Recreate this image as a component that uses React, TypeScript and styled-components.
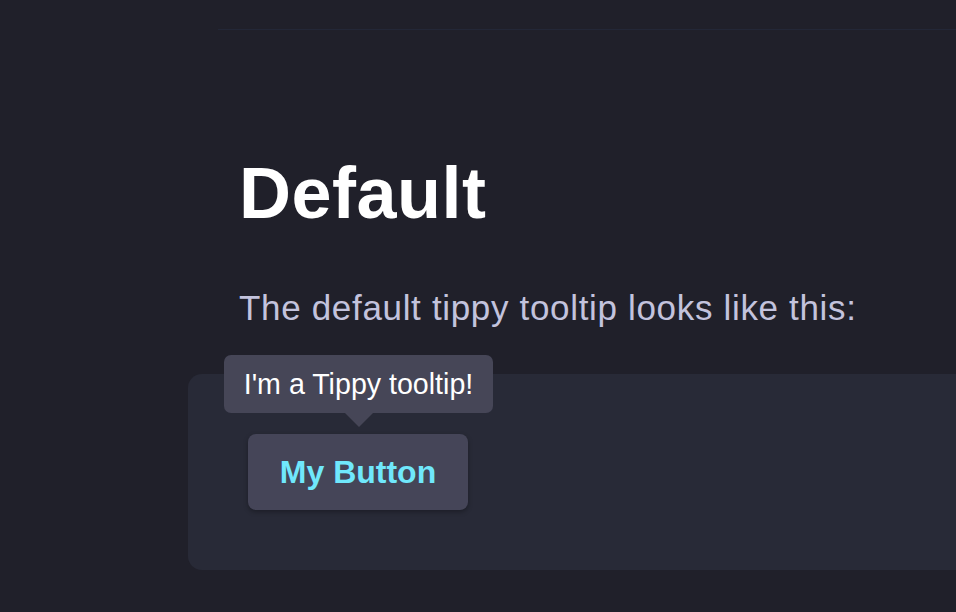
import styled, { createGlobalStyle } from 'styled-components';

const GlobalStyle = createGlobalStyle`
  html, body {
    margin: 0;
    padding: 0;
    background-color: #20202a;
    overflow: hidden;
  }
  body {
    font-family: "Liberation Sans", Arial, Helvetica, sans-serif;
  }
`;

const Page = styled.div`
  width: 956px;
  height: 612px;
  background-color: #20202a;
`;

const TopBar = styled.div`
  margin-left: 218px;
  height: 29px;
  border-bottom: 1px solid #232737;
`;

const Content = styled.main`
  padding-left: 239px;
  padding-top: 127px;
`;

const Heading = styled.h1`
  margin: 0;
  font-size: 72px;
  line-height: 72px;
  font-weight: 700;
  color: #ffffff;
  letter-spacing: 0.5px;
`;

const Lead = styled.p`
  margin: 61px 0 0;
  font-size: 35px;
  line-height: 35px;
  color: #c3c3dd;
  letter-spacing: 0.67px;
`;

const DemoPanel = styled.section`
  margin: 49px 0 0 -51px;
  padding: 60px;
  background-color: #282a37;
  border-radius: 14px 0 0 14px;
`;

const Anchor = styled.div`
  position: relative;
  display: inline-block;
`;

const Button = styled.button`
  display: flex;
  align-items: center;
  justify-content: center;
  width: 220px;
  height: 76px;
  padding: 0;
  border: none;
  border-radius: 8px;
  background-color: #454558;
  box-shadow: 0 2px 5px rgba(0, 0, 0, 0.3);
  color: #70e8fc;
  font-family: "Liberation Sans", Arial, sans-serif;
  font-size: 32px;
  font-weight: 700;
  cursor: pointer;
`;

const Tooltip = styled.div`
  position: absolute;
  left: -24px;
  top: -79px;
  width: 269px;
  height: 58px;
  box-sizing: border-box;
  display: flex;
  align-items: center;
  justify-content: center;
  background-color: #464657;
  border-radius: 7px;
  color: #ffffff;
  font-size: 28.6px;
  white-space: nowrap;

  &::after {
    content: '';
    position: absolute;
    left: 50%;
    bottom: -14px;
    margin-left: -14px;
    border-left: 14px solid transparent;
    border-right: 14px solid transparent;
    border-top: 14px solid #464657;
  }
`;

export default function App() {
  return (
    <Page>
      <GlobalStyle />
      <TopBar />
      <Content>
        <Heading>Default</Heading>
        <Lead>The default tippy tooltip looks like this:</Lead>
        <DemoPanel>
          <Anchor>
            <Tooltip>I'm a Tippy tooltip!</Tooltip>
            <Button>My Button</Button>
          </Anchor>
        </DemoPanel>
      </Content>
    </Page>
  );
}
